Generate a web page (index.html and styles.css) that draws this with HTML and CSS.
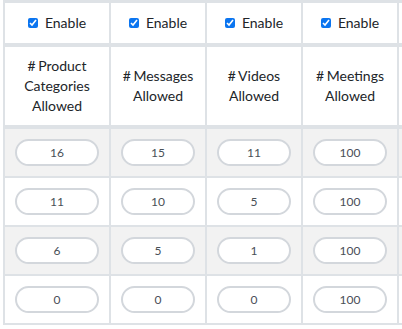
FILE: index.html
```html
<!DOCTYPE html>
<html lang="en">

<head>
    <meta charset="UTF-8">
    <meta name="viewport" content="width=device-width, initial-scale=1.0">
    <title>Plan limits</title>
    <link rel="stylesheet" href="styles.css">
</head>

<body>
    <div class="table-wrap">
        <table class="limits">
            <colgroup>
                <col class="col-wide">
                <col class="col-std">
                <col class="col-std">
                <col class="col-std">
                <col class="col-rest">
            </colgroup>
            <thead>
                <tr class="enable-row">
                    <th><label><input type="checkbox" checked> Enable</label></th>
                    <th><label><input type="checkbox" checked> Enable</label></th>
                    <th><label><input type="checkbox" checked> Enable</label></th>
                    <th><label><input type="checkbox" checked> Enable</label></th>
                    <th></th>
                </tr>
                <tr class="title-row">
                    <th># Product Categories Allowed</th>
                    <th># Messages Allowed</th>
                    <th># Videos Allowed</th>
                    <th># Meetings Allowed</th>
                    <th></th>
                </tr>
            </thead>
            <tbody>
                <tr>
                    <td><input class="limit" type="text" value="16"></td>
                    <td><input class="limit" type="text" value="15"></td>
                    <td><input class="limit" type="text" value="11"></td>
                    <td><input class="limit" type="text" value="100"></td>
                    <td></td>
                </tr>
                <tr>
                    <td><input class="limit" type="text" value="11"></td>
                    <td><input class="limit" type="text" value="10"></td>
                    <td><input class="limit" type="text" value="5"></td>
                    <td><input class="limit" type="text" value="100"></td>
                    <td></td>
                </tr>
                <tr>
                    <td><input class="limit" type="text" value="6"></td>
                    <td><input class="limit" type="text" value="5"></td>
                    <td><input class="limit" type="text" value="1"></td>
                    <td><input class="limit" type="text" value="100"></td>
                    <td></td>
                </tr>
                <tr>
                    <td><input class="limit" type="text" value="0"></td>
                    <td><input class="limit" type="text" value="0"></td>
                    <td><input class="limit" type="text" value="0"></td>
                    <td><input class="limit" type="text" value="100"></td>
                    <td></td>
                </tr>
            </tbody>
        </table>
    </div>
</body>

</html>
```

FILE: styles.css
```css
html,
body {
    margin: 0;
    padding: 0;
    background: #fff;
    color: #212529;
    font-family: Lato, "Open Sans", sans-serif;
}

.table-wrap {
    width: 402px;
    overflow: hidden;
    padding-left: 3px;
    box-sizing: border-box;
}

.limits {
    border-collapse: collapse;
    table-layout: fixed;
    width: 451px;
}

.limits .col-wide {
    width: 106px;
}

.limits .col-std {
    width: 96px;
}

.limits .col-rest {
    width: 57px;
}

.limits th,
.limits td {
    border: 2px solid #dee2e6;
    text-align: center;
    vertical-align: middle;
}

.limits th {
    font-size: 14px;
    font-weight: 400;
    line-height: 20px;
    padding: 9px 10px;
}

.limits thead tr {
    border-bottom: 4px solid #dee2e6;
}

.limits thead tr.enable-row th {
    border-top-width: 3px;
    padding: 10px;
}

.title-row th {
    word-spacing: -1px;
}

.enable-row label {
    display: inline-flex;
    align-items: center;
    gap: 7px;
}

.enable-row input {
    width: 10px;
    height: 10px;
    margin: 0;
    accent-color: #0b75f0;
}

.limits td {
    padding: 10px;
}

.limits tbody tr:nth-child(odd) {
    background: #f2f2f2;
}

.limit {
    display: block;
    width: 100%;
    height: 27px;
    box-sizing: border-box;
    border: 2px solid #d3d7dc;
    border-radius: 14px;
    background: #fff;
    color: #495057;
    font-family: Lato, "Open Sans", sans-serif;
    font-size: 12px;
    text-align: center;
    padding: 0 6px;
    outline: none;
}
```
